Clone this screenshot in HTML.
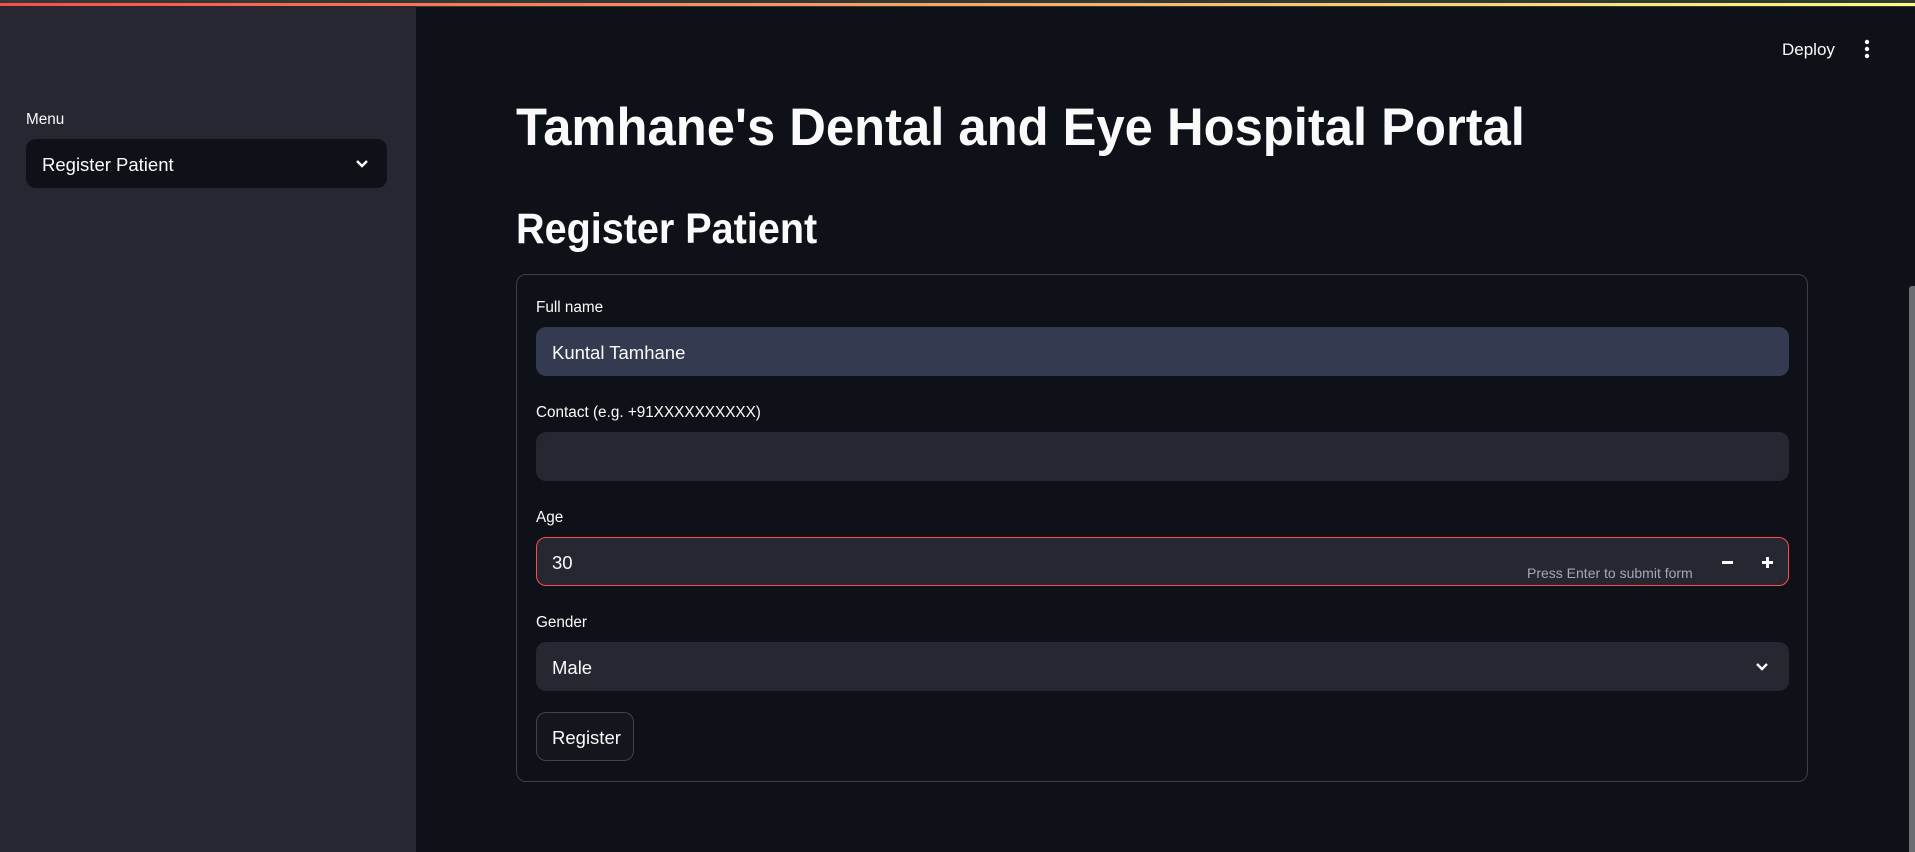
<!DOCTYPE html>
<html><head><meta charset="utf-8"><style>
*{box-sizing:border-box;margin:0;padding:0}
body{width:1915px;height:852px;background:#0e1117;overflow:hidden;position:relative;font-family:"Liberation Sans",sans-serif;color:#fafafa}
.abs{position:absolute}
.topbar{left:0;top:0;width:1915px;height:7px;background:#2d3a35}
.grad{left:0;top:3px;width:1915px;height:3px;background:linear-gradient(90deg,#ff4b4b,#fffd80)}
.side{left:0;top:6px;width:416px;height:846px;background:#262730}
.lbl{font-size:15.3px;color:#fafafa;white-space:nowrap}
.box{border-radius:10px;display:flex;align-items:center;padding-left:16px;padding-top:3px;font-size:18.5px;white-space:nowrap}
.chev{position:absolute;right:18px;top:50%;margin-top:-6px}
.sx{display:inline-block;transform-origin:left center;white-space:nowrap}
</style></head><body>
<div class="abs topbar"></div><div class="abs grad"></div>
<div class="abs side"></div>
<div class="abs lbl" style="left:26px;top:111px">Menu</div>
<div class="abs box" style="left:26px;top:139px;width:361px;height:49px;background:#0e1117">Register Patient
<svg class="chev" width="14" height="12" viewBox="0 0 14 12"><path d="M2 3l5 5 5-5" stroke="#fafafa" stroke-width="2.4" fill="none"/></svg></div>

<div class="abs" style="left:1782px;top:40px;font-size:17px">Deploy</div>
<svg class="abs" style="left:1863px;top:39px" width="8" height="20"><circle cx="4" cy="3" r="2.2" fill="#fafafa"/><circle cx="4" cy="10" r="2.2" fill="#fafafa"/><circle cx="4" cy="17" r="2.2" fill="#fafafa"/></svg>

<div class="abs" style="left:516px;top:95px;font-size:53px;font-weight:bold;line-height:66px"><span class="sx" style="transform:scaleX(0.957)">Tamhane's Dental and Eye Hospital Portal</span></div>
<div class="abs" style="left:516px;top:203px;font-size:43px;font-weight:bold;line-height:52px"><span class="sx" style="transform:scaleX(0.92)">Register Patient</span></div>

<div class="abs" style="left:516px;top:274px;width:1292px;height:508px;border:1px solid rgba(250,250,250,0.2);border-radius:10px"></div>

<div class="abs lbl" style="left:536px;top:299px">Full name</div>
<div class="abs box" style="left:536px;top:327px;width:1253px;height:49px;background:#343b50">Kuntal Tamhane</div>

<div class="abs lbl" style="left:536px;top:404px">Contact (e.g. +91XXXXXXXXXX)</div>
<div class="abs box" style="left:536px;top:432px;width:1253px;height:49px;background:#262730"></div>

<div class="abs lbl" style="left:536px;top:509px">Age</div>
<div class="abs box" style="left:536px;top:537px;width:1253px;height:49px;background:#262730;border:1px solid #ff4b4b;padding-left:15px">30</div>
<div class="abs" style="left:1527px;top:565px;font-size:14px;color:#a3a8b4">Press Enter to submit form</div>
<div class="abs" style="left:1722px;top:561px;width:11px;height:2.5px;background:#fafafa"></div>
<div class="abs" style="left:1762px;top:561px;width:11px;height:2.5px;background:#fafafa"></div>
<div class="abs" style="left:1766px;top:557px;width:2.5px;height:11px;background:#fafafa"></div>

<div class="abs lbl" style="left:536px;top:614px">Gender</div>
<div class="abs box" style="left:536px;top:642px;width:1253px;height:49px;background:#262730">Male
<svg class="chev" width="14" height="12" viewBox="0 0 14 12" style="right:20px"><path d="M2 3l5 5 5-5" stroke="#fafafa" stroke-width="2.4" fill="none"/></svg></div>

<div class="abs box" style="left:536px;top:712px;width:98px;height:49px;background:#13161d;border:1px solid rgba(250,250,250,0.2);padding-left:15px">Register</div>

<div class="abs" style="left:1909px;top:286px;width:6px;height:566px;background:#6b6d72;border-radius:3px 0 0 0"></div>
</body></html>
